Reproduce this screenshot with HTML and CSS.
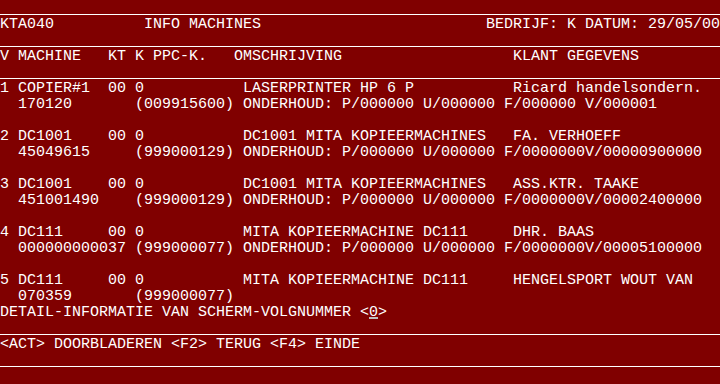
FILE: index.html
```
<!DOCTYPE html>
<html lang="nl">
<head>
  <meta charset="UTF-8" />
  <title>KTA040 - Info Machines</title>
  <link rel="stylesheet" href="styles.css">
</head>
<body>

  <div class="scherm">
    <div class="regel rule"></div>
    <div class="regel">KTA040          INFO MACHINES                         BEDRIJF: K DATUM: 29/05/00</div>
    <div class="regel rule"></div>
    <div class="regel">V MACHINE   KT K PPC-K.   OMSCHRIJVING                   KLANT GEGEVENS</div>
    <div class="regel rule"></div>

    <!-- lijst machines -->
    <div class="regel">1 COPIER#1  00 0           LASERPRINTER HP 6 P           Ricard handelsondern.</div>
    <div class="regel">  170120       (009915600) ONDERHOUD: P/000000 U/000000 F/000000 V/000001</div>
    <div class="regel"></div>
    <div class="regel">2 DC1001    00 0           DC1001 MITA KOPIEERMACHINES   FA. VERHOEFF</div>
    <div class="regel">  45049615     (999000129) ONDERHOUD: P/000000 U/000000 F/0000000V/00000900000</div>
    <div class="regel"></div>
    <div class="regel">3 DC1001    00 0           DC1001 MITA KOPIEERMACHINES   ASS.KTR. TAAKE</div>
    <div class="regel">  451001490    (999000129) ONDERHOUD: P/000000 U/000000 F/0000000V/00002400000</div>
    <div class="regel"></div>
    <div class="regel">4 DC111     00 0           MITA KOPIEERMACHINE DC111     DHR. BAAS</div>
    <div class="regel">  000000000037 (999000077) ONDERHOUD: P/000000 U/000000 F/0000000V/00005100000</div>
    <div class="regel"></div>
    <div class="regel">5 DC111     00 0           MITA KOPIEERMACHINE DC111     HENGELSPORT WOUT VAN</div>
    <div class="regel">  070359       (999000077)</div>
    <div class="regel">DETAIL-INFORMATIE VAN SCHERM-VOLGNUMMER &lt;<span class="cursor">0</span>&gt;</div>

    <div class="regel rule"></div>
    <div class="regel">&lt;ACT&gt; DOORBLADEREN &lt;F2&gt; TERUG &lt;F4&gt; EINDE</div>
    <div class="regel rule"></div>
    <div class="regel"></div>
  </div>

</body>
</html>
```

FILE: styles.css
```
html, body {
  margin: 0;
  padding: 0;
  background-color: #800000;
}

.scherm {
  width: 720px;
  height: 384px;
  overflow: hidden;
  background-color: #800000;
  color: #ffffff;
  font-family: 'Liberation Mono', 'DejaVu Sans Mono', monospace;
  font-size: 15px;
}

.regel {
  height: 16px;
  line-height: 16px;
  white-space: pre;
  padding-top: 1px;
  box-sizing: border-box;
}

.regel.rule {
  height: 15px;
  padding-top: 0;
  border-bottom: 1px solid #ffffff;
  margin-bottom: 1px;
}

.cursor {
  display: inline-block;
  height: 16px;
  vertical-align: top;
  background: linear-gradient(to bottom, transparent 12px, #c0c0c0 12px, #c0c0c0 14px, transparent 14px);
}
```
